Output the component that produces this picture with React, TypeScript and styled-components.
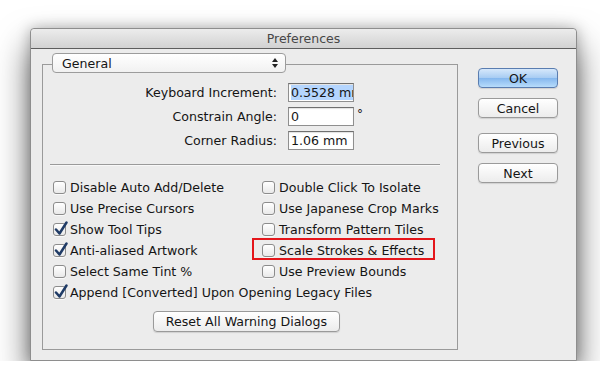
import styled, {createGlobalStyle} from 'styled-components';

const GlobalStyle = createGlobalStyle`
  body {
    margin: 0;
    background: #ffffff;
    font-family: "DejaVu Sans", "Noto Sans", sans-serif;
    color: #151515;
  }
`;

const leftOptions = [
  {label: 'Disable Auto Add/Delete', checked: false},
  {label: 'Use Precise Cursors', checked: false},
  {label: 'Show Tool Tips', checked: true},
  {label: 'Anti-aliased Artwork', checked: true},
  {label: 'Select Same Tint %', checked: false},
];

const rightOptions = [
  {label: 'Double Click To Isolate', highlighted: false},
  {label: 'Use Japanese Crop Marks', highlighted: false},
  {label: 'Transform Pattern Tiles', highlighted: false},
  {label: 'Scale Strokes & Effects', highlighted: true},
  {label: 'Use Preview Bounds', highlighted: false},
];

const CheckBox = ({checked}: {checked: boolean}) => (
  <Box>
    {checked && (
      <CheckMark width="16" height="16" viewBox="0 0 16 16">
        <path d="M3 8.5 L6.5 12.5 L13.5 1.5" fill="none" stroke="#1f3b66" strokeWidth="2.5" strokeLinecap="round" strokeLinejoin="round"/>
      </CheckMark>
    )}
  </Box>
);

export default function App() {
  return (
    <>
      <GlobalStyle/>
      <Window>
        <TitleBar>Preferences</TitleBar>
        <Body>
          <GroupBox>
            <Popup>
              <span>General</span>
              <svg width="8" height="12" viewBox="0 0 8 12">
                <path d="M4 1 L7 5 L1 5 Z" fill="#222"/>
                <path d="M4 11 L7 7 L1 7 Z" fill="#222"/>
              </svg>
            </Popup>
            <Fields>
              <FieldLabel>Keyboard Increment:</FieldLabel>
              <Field><Selected>0.3528 mm</Selected></Field>
              <Unit/>
              <FieldLabel>Constrain Angle:</FieldLabel>
              <Field>0</Field>
              <Unit>°</Unit>
              <FieldLabel>Corner Radius:</FieldLabel>
              <Field>1.06 mm</Field>
              <Unit/>
            </Fields>
            <Separator/>
            <Options>
              <Column>
                {leftOptions.map((o) => (
                  <Option key={o.label}>
                    <CheckBox checked={o.checked}/>
                    {o.label}
                  </Option>
                ))}
              </Column>
              <Column>
                {rightOptions.map((o) => (
                  <Option key={o.label} $highlighted={o.highlighted}>
                    <CheckBox checked={false}/>
                    {o.label}
                  </Option>
                ))}
              </Column>
            </Options>
            <Option>
              <CheckBox checked/>
              Append [Converted] Upon Opening Legacy Files
            </Option>
            <ResetButton>Reset All Warning Dialogs</ResetButton>
          </GroupBox>
          <ButtonColumn>
            <PushButton $primary>OK</PushButton>
            <PushButton>Cancel</PushButton>
            <PushButton $spaced>Previous</PushButton>
            <PushButton>Next</PushButton>
          </ButtonColumn>
        </Body>
      </Window>
    </>
  );
}

const Window = styled.div`
  margin: 28px 0 0 30px;
  width: 545px;
  border: 1px solid #8e8e8e;
  border-radius: 4px 4px 0 0;
  background: #ececec;
  box-shadow: 0 18px 34px rgba(0, 0, 0, 0.6), 0 0 14px rgba(0, 0, 0, 0.25);
`;

const TitleBar = styled.div`
  height: 19px;
  line-height: 19px;
  text-align: center;
  font-size: 12.5px;
  color: #474747;
  background: linear-gradient(#ececec, #d2d2d2);
  border-bottom: 1px solid #5e5e5e;
  border-radius: 4px 4px 0 0;
`;

const Body = styled.div`
  display: flex;
  padding: 15px 17px 10px 11px;
`;

const GroupBox = styled.div`
  width: 414px;
  height: 284px;
  border: 1px solid #9a9a9a;
  box-sizing: content-box;
  display: flex;
  flex-direction: column;
  font-size: 12.6px;
`;

const Popup = styled.div`
  margin: -12px 0 0 9px;
  width: 234px;
  height: 20px;
  box-sizing: border-box;
  border: 1px solid #9c9c9c;
  border-radius: 4px;
  background: linear-gradient(#ffffff, #f1f1f1);
  display: flex;
  align-items: center;
  justify-content: space-between;
  padding: 0 6px 0 9px;
  font-size: 12.6px;
`;

const Fields = styled.div`
  display: grid;
  grid-template-columns: 234px 66px auto;
  column-gap: 11px;
  row-gap: 5px;
  margin-top: 10px;
  align-items: center;
  & > :nth-child(3n) {
    margin-left: -8px;
  }
`;

const FieldLabel = styled.div`
  text-align: right;
`;

const Field = styled.div`
  height: 19px;
  box-sizing: border-box;
  border: 1px solid #8f8f8f;
  border-top-color: #6f6f6f;
  background: #ffffff;
  box-shadow: inset 0 1px 1px rgba(0, 0, 0, 0.12);
  padding: 0 2px;
  line-height: 17px;
  overflow: hidden;
  white-space: nowrap;
`;

const Selected = styled.span`
  background: #b4d5fe;
  padding-right: 4px;
`;

const Unit = styled.div`
  font-size: 12px;
  align-self: start;
`;

const Separator = styled.div`
  margin: 14px 0 0 7px;
  width: 390px;
  height: 1px;
  background: #9a9a9a;
  border-bottom: 1px solid #f8f8f8;
`;

const Options = styled.div`
  display: grid;
  grid-template-columns: 209px auto;
  margin-top: 11px;
`;

const Column = styled.div`
  display: flex;
  flex-direction: column;
`;

const Option = styled.div<{$highlighted?: boolean}>`
  position: relative;
  height: 21px;
  display: flex;
  align-items: center;
  gap: 4px;
  padding-left: 10px;
  white-space: nowrap;
  &::after {
    content: '';
    display: ${(p) => (p.$highlighted ? 'block' : 'none')};
    position: absolute;
    left: 0;
    top: -2px;
    width: 183px;
    height: 22px;
    box-sizing: border-box;
    border: 2px solid #e4161b;
  }
`;

const Box = styled.span`
  position: relative;
  flex: none;
  width: 13px;
  height: 13px;
  box-sizing: border-box;
  border: 1px solid #8c8c8c;
  border-radius: 3px;
  background: linear-gradient(#ffffff, #e9e9e9);
  box-shadow: 0 1px 0 rgba(255, 255, 255, 0.7);
`;

const CheckMark = styled.svg`
  position: absolute;
  left: -1px;
  top: -3px;
`;

const ResetButton = styled.div`
  margin: 8px 0 0 110px;
  width: 187px;
  height: 21px;
  box-sizing: border-box;
  border: 1px solid #9a9a9a;
  border-radius: 4px;
  background: linear-gradient(#ffffff, #ececec);
  box-shadow: 0 1px 1px rgba(0, 0, 0, 0.12);
  display: flex;
  align-items: center;
  justify-content: center;
`;

const ButtonColumn = styled.div`
  margin: 4px 0 0 20px;
  display: flex;
  flex-direction: column;
  gap: 10px;
  font-size: 12.6px;
`;

const PushButton = styled.div<{$primary?: boolean; $spaced?: boolean}>`
  width: 80px;
  height: 20px;
  margin-top: ${(p) => (p.$spaced ? '5px' : '0')};
  box-sizing: border-box;
  border: 1px solid ${(p) => (p.$primary ? '#5a7db0' : '#9a9a9a')};
  border-radius: 4px;
  background: ${(p) => (p.$primary
    ? 'linear-gradient(#d6e8fb 0%, #a9cdf3 48%, #86b8ee 52%, #b7dcfb 100%)'
    : 'linear-gradient(#ffffff, #ececec)')};
  box-shadow: 0 1px 1px rgba(0, 0, 0, 0.12);
  display: flex;
  align-items: center;
  justify-content: center;
`;
